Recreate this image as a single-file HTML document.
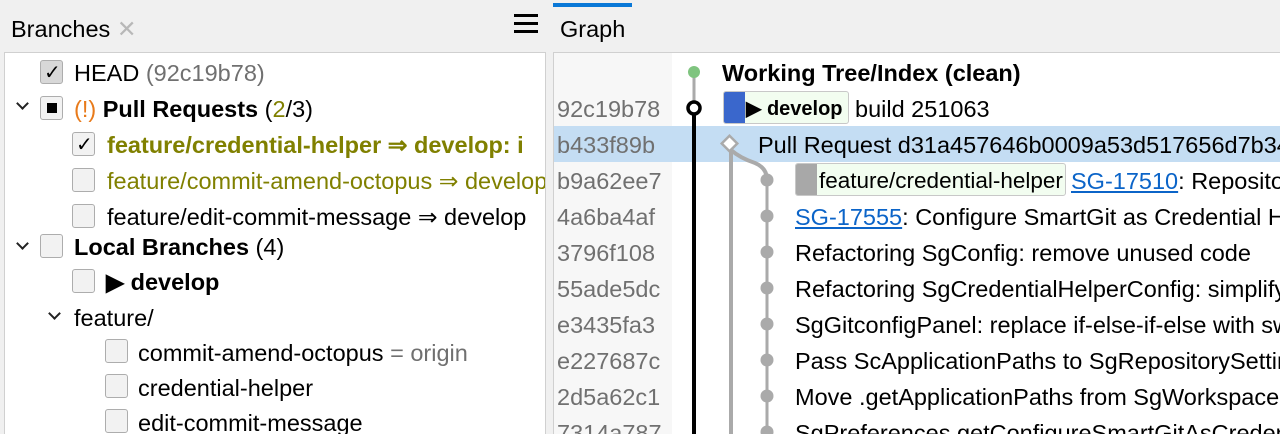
<!DOCTYPE html>
<html><head><style>
*{margin:0;padding:0;box-sizing:border-box}
html,body{width:1280px;height:434px;overflow:hidden}
body{background:#f0f0f0;font-family:"Liberation Sans",sans-serif;font-size:23.5px;color:#000;position:relative}
.a{position:absolute;white-space:nowrap;line-height:36px;height:36px}
.cb{position:absolute;width:23px;height:24px;border:1px solid #adadad;border-radius:3px;background:#f2f2f2}
.chev{position:absolute;width:9px;height:9px;border-right:2.2px solid #222;border-bottom:2.2px solid #222;transform:rotate(45deg)}
.g{color:#707070}
.ol{color:#808000}
.b{font-weight:bold}
.lk{color:#0b64c8;text-decoration:underline}
.clip{position:absolute;left:5px;top:53px;width:540px;height:381px;overflow:hidden}
.gclip{position:absolute;left:0;top:0;width:1280px;height:434px;overflow:hidden}
</style></head><body>
<div class="a" style="left:11px;top:11px">Branches <span style="color:#b8b8b8">✕</span></div>
<div style="position:absolute;left:514px;top:14px;width:24px;height:3px;background:#000"></div>
<div style="position:absolute;left:514px;top:22px;width:24px;height:3px;background:#000"></div>
<div style="position:absolute;left:514px;top:30px;width:24px;height:3px;background:#000"></div>
<div style="position:absolute;left:4px;top:52px;width:542px;height:382px;background:#fff;border:1px solid #d0d0d0;border-bottom:none"></div>
<div class="clip"><div style="position:absolute;left:-5px;top:-53px;width:600px;height:500px">
<div class="cb" style="left:40px;top:60px;background:#d8d8d8"></div><div class="a" style="left:44px;top:55px;font-size:20px">✓</div>
<div class="a" style="left:74px;top:55px">HEAD <span class="g">(92c19b78)</span></div>

<div class="chev" style="left:18px;top:99px"></div>
<div class="cb" style="left:40px;top:96px"></div><div style="position:absolute;left:47px;top:103px;width:10px;height:10px;background:#000"></div>
<div class="a" style="left:74px;top:91px"><span style="color:#e87a1a">(!)</span> <span class="b">Pull Requests</span> (<span class="ol">2</span>/3)</div>

<div class="cb" style="left:72px;top:132px"></div><div class="a" style="left:76px;top:127px;font-size:20px">✓</div>
<div class="a b ol" style="left:107px;top:127px">feature/credential-helper ⇒ develop: i</div>
<div class="cb" style="left:72px;top:168px"></div>
<div class="a ol" style="left:107px;top:163px">feature/commit-amend-octopus ⇒ develop</div>
<div class="cb" style="left:72px;top:204px"></div>
<div class="a" style="left:107px;top:199px">feature/edit-commit-message ⇒ develop</div>

<div class="chev" style="left:18px;top:239px"></div>
<div class="cb" style="left:40px;top:234px"></div>
<div class="a" style="left:74px;top:229px"><span class="b">Local Branches</span> (4)</div>
<div class="cb" style="left:72px;top:269px"></div>
<div class="a b" style="left:106px;top:264px">▶ develop</div>
<div class="chev" style="left:50px;top:309px"></div>
<div class="a" style="left:74px;top:300px">feature/</div>
<div class="cb" style="left:105px;top:339px"></div>
<div class="a" style="left:138px;top:335px">commit-amend-octopus <span class="g">= origin</span></div>
<div class="cb" style="left:105px;top:374px"></div>
<div class="a" style="left:138px;top:370px">credential-helper</div>
<div class="cb" style="left:105px;top:409px"></div>
<div class="a" style="left:138px;top:405px">edit-commit-message</div>
</div></div>

<div style="position:absolute;left:553px;top:3px;width:79px;height:4px;background:#0a78d7"></div>
<div class="a" style="left:560px;top:11px">Graph</div>
<div style="position:absolute;left:553px;top:52px;width:727px;height:382px;background:#fff;border:1px solid #d0d0d0;border-bottom:none;border-right:none"></div>
<div class="gclip">
<div style="position:absolute;left:554px;top:53px;width:118px;height:381px;background:#f7f7f7"></div>
<div style="position:absolute;left:554px;top:126px;width:726px;height:36px;background:#c4ddf3"></div>
<div class="a g" style="left:557px;top:91px">92c19b78</div>
<div class="a g" style="left:557px;top:127px">b433f89b</div>
<div class="a g" style="left:557px;top:163px">b9a62ee7</div>
<div class="a g" style="left:557px;top:199px">4a6ba4af</div>
<div class="a g" style="left:557px;top:235px">3796f108</div>
<div class="a g" style="left:557px;top:271px">55ade5dc</div>
<div class="a g" style="left:557px;top:307px">e3435fa3</div>
<div class="a g" style="left:557px;top:343px">e227687c</div>
<div class="a g" style="left:557px;top:379px">2d5a62c1</div>
<div class="a g" style="left:557px;top:415px;height:19px;overflow:hidden">7314a787</div>
<svg style="position:absolute;left:0;top:0" width="1280" height="434">
<line x1="694" y1="72" x2="694" y2="108" stroke="#aaa" stroke-width="3"/>
<line x1="694" y1="108" x2="694" y2="434" stroke="#000" stroke-width="4"/>
<circle cx="694" cy="72" r="6" fill="#7fc47f"/>
<circle cx="694" cy="108" r="6" fill="#fff" stroke="#000" stroke-width="3.5"/>
<line x1="731" y1="150" x2="731" y2="434" stroke="#aaa" stroke-width="4"/>
<path d="M731 150 Q740 158 755 163 Q767 168 767 180" fill="none" stroke="#aaa" stroke-width="4"/>
<rect x="724" y="138" width="11" height="11" transform="rotate(45 729.5 143.5)" fill="#fff" stroke="#aaa" stroke-width="2.5"/>
<line x1="767" y1="180" x2="767" y2="434" stroke="#aaa" stroke-width="3"/>
<g fill="#aaa"><circle cx="767" cy="180" r="6.5"/><circle cx="767" cy="216" r="6.5"/><circle cx="767" cy="252" r="6.5"/><circle cx="767" cy="288" r="6.5"/><circle cx="767" cy="324" r="6.5"/><circle cx="767" cy="360" r="6.5"/><circle cx="767" cy="396" r="6.5"/><circle cx="767" cy="432" r="6.5"/></g>
</svg>
<div class="a b" style="left:722px;top:55px">Working Tree/Index (clean)</div>
<div style="position:absolute;left:723px;top:91px;width:126px;height:33px;border:1px solid #c8c8c8;border-radius:3px;background:#f2fdf0;overflow:hidden"><div style="width:21px;height:100%;background:#3a67cc"></div></div>
<div class="a b" style="left:746px;top:91px;font-size:20px">▶ develop</div>
<div class="a" style="left:855px;top:91px">build 251063</div>
<div class="a" style="left:758px;top:127px">Pull Request d31a457646b0009a53d517656d7b34</div>
<div style="position:absolute;left:795px;top:163px;width:271px;height:33px;border:1px solid #c8c8c8;border-radius:3px;background:#f2fdf0;overflow:hidden"><div style="width:21px;height:100%;background:#a8a8a8"></div></div>
<div class="a" style="left:819px;top:163px;font-size:22.5px">feature/credential-helper</div>
<div class="a" style="left:1071px;top:163px"><span class="lk">SG-17510</span>: Repository</div>
<div class="a" style="left:795px;top:199px"><span class="lk">SG-17555</span>: Configure SmartGit as Credential Helper</div>
<div class="a" style="left:795px;top:235px">Refactoring SgConfig: remove unused code</div>
<div class="a" style="left:795px;top:271px">Refactoring SgCredentialHelperConfig: simplify</div>
<div class="a" style="left:795px;top:307px">SgGitconfigPanel: replace if-else-if-else with switch</div>
<div class="a" style="left:795px;top:343px">Pass ScApplicationPaths to SgRepositorySettings</div>
<div class="a" style="left:795px;top:379px">Move .getApplicationPaths from SgWorkspace</div>
<div class="a" style="left:795px;top:415px;height:19px;overflow:hidden">SgPreferences.getConfigureSmartGitAsCredential</div>
</div>
</body></html>
